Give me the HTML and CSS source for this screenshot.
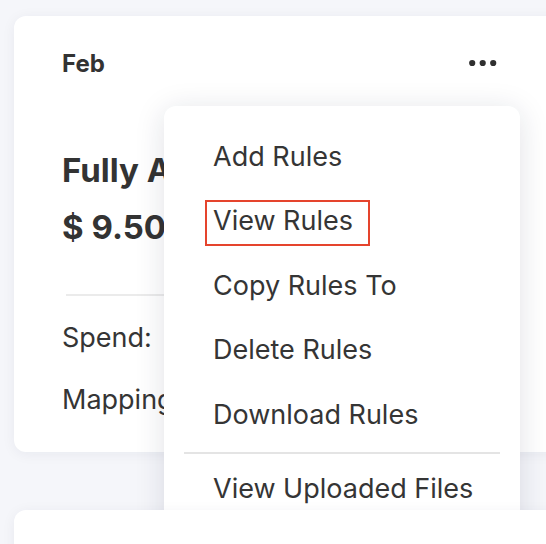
FILE: index.html
```html
<!DOCTYPE html>
<html>
<head>
<meta charset="utf-8">
<link rel="stylesheet" href="styles.css">
</head>
<body>
<div class="page">
  <div class="card">
    <div class="card-head">
      <span class="month">Feb</span>
      <svg class="dots" width="28" height="8" viewBox="0 0 28 8"><circle cx="3.2" cy="4" r="3.1"/><circle cx="13.7" cy="4" r="3.1"/><circle cx="24.2" cy="4" r="3.1"/></svg>
    </div>
    <div class="title">Fully Allocated</div>
    <div class="price">$ 9.50K</div>
    <div class="rule"></div>
    <div class="stat">Spend:</div>
    <div class="stat">Mapping</div>

    <div class="menu">
      <div class="item">Add Rules</div>
      <div class="item"><span class="selected">View Rules</span></div>
      <div class="item">Copy Rules To</div>
      <div class="item">Delete Rules</div>
      <div class="item">Download Rules</div>
      <div class="menu-sep"></div>
      <div class="item">View Uploaded Files</div>
    </div>
  </div>
  <div class="card card-next"></div>
</div>
</body>
</html>
```

FILE: styles.css
```css
html, body {
  margin: 0;
  padding: 0;
}
body {
  background: #f5f6fa;
  font-family: Inter, "Noto Sans", sans-serif;
  color: #333333;
  overflow: hidden;
  width: 546px;
  height: 544px;
}
.page {
  padding: 16px 0 0 14px;
}
.card {
  position: relative;
  width: 560px;
  box-sizing: border-box;
  padding: 32px 48px 21px 48px;
  background: #ffffff;
  border-radius: 12px;
  box-shadow: 0 2px 14px rgba(20, 30, 70, 0.06);
}
.card-head {
  display: flex;
  justify-content: space-between;
  align-items: center;
  height: 32px;
  margin-right: 29px;
}
.month {
  font-size: 24px;
  font-weight: 700;
  line-height: 32px;
}
.dots {
  display: block;
  fill: #2f2f2f;
  margin-top: -2px;
}
.title, .price {
  font-size: 33px;
  font-weight: 700;
  line-height: 40px;
  white-space: nowrap;
}
.title {
  margin-top: 70px;
}
.price {
  margin-top: 17px;
}
.rule {
  height: 2px;
  background: #ebebeb;
  margin: 47px 0 0 4px;
  width: 300px;
}
.stat {
  font-size: 27px;
  line-height: 62px;
  white-space: nowrap;
  color: #353535;
}
.rule + .stat {
  margin-top: 11px;
}
.card-next {
  margin-top: 58px;
  height: 120px;
}
.menu {
  position: absolute;
  left: 150px;
  top: 90px;
  width: 356px;
  box-sizing: border-box;
  padding: 18.5px 0 16px 0;
  background: #ffffff;
  border-radius: 12px;
  box-shadow: 0 4px 30px rgba(20, 30, 60, 0.13);
}
.item {
  font-size: 27px;
  line-height: 64.5px;
  padding-left: 49px;
  white-space: nowrap;
  color: #353535;
}
.selected {
  display: inline-block;
  line-height: 38px;
  padding: 0 15px 4px 6px;
  margin-left: -8px;
  border: 2px solid #e5442d;
}
.menu-sep {
  height: 2px;
  background: #e4e4e4;
  margin: 5px 20px 3px 20px;
}
```
